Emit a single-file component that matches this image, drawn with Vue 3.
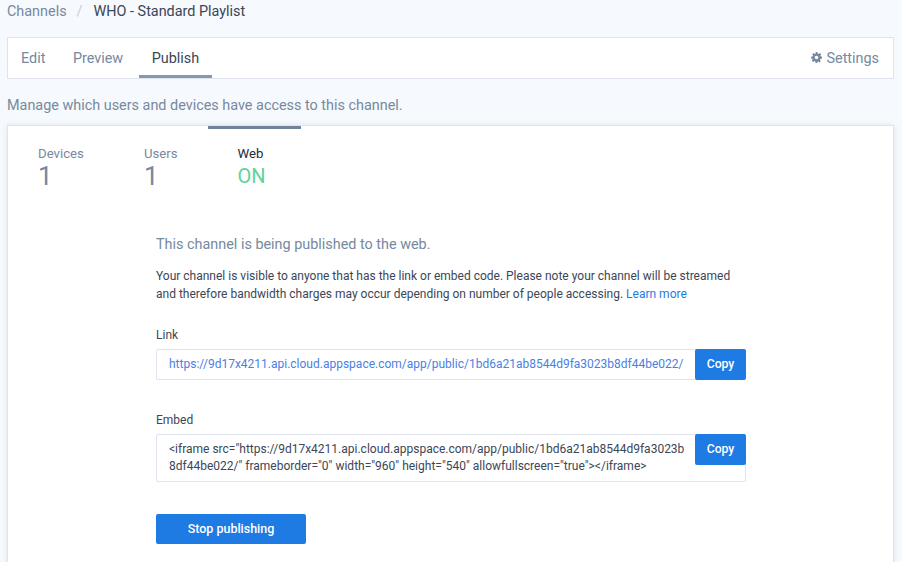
<script setup>
const tabs = ['Edit', 'Preview', 'Publish']
const stats = [
  { label: 'Devices', value: '1' },
  { label: 'Users', value: '1' },
  { label: 'Web', value: 'ON', active: true }
]
const link = 'https://9d17x4211.api.cloud.appspace.com/app/public/1bd6a21ab8544d9fa3023b8df44be022/'
const embed = '<iframe src="https://9d17x4211.api.cloud.appspace.com/app/public/1bd6a21ab8544d9fa3023b8df44be022/" frameborder="0" width="960" height="540" allowfullscreen="true"></iframe>'
</script>

<template>
  <div class="page">
    <nav class="crumbs">
      <span class="crumb-link">Channels</span>
      <span class="crumb-sep">/</span>
      <span class="crumb-current">WHO - Standard Playlist</span>
    </nav>

    <div class="tabbar">
      <div class="tabs">
        <div v-for="t in tabs" :key="t" class="tab" :class="{ on: t === 'Publish' }">{{ t }}</div>
      </div>
      <div class="settings">
        <svg class="gear" viewBox="0 0 24 24" width="11" height="11" aria-hidden="true">
          <path fill="#76899e" fill-rule="evenodd" d="M10 0h4l.6 3.200c.8.2 1.500.5 2.200.9L19.500 2.300l2.800 2.800-1.800 2.700c.4.700.7 1.400.9 2.200L24 10.600v3.800l-3.600.6c-.2.800-.5 1.500-.9 2.200l1.800 2.700-2.800 2.800-2.700-1.800c-.7.4-1.400.7-2.200.9L14 24h-4l-.6-3.200c-.8-.2-1.500-.5-2.200-.9l-2.700 1.800-2.800-2.800 1.800-2.700c-.4-.7-.7-1.400-.9-2.200L0 14.400v-3.800l3.600-.6c.2-.8.5-1.500.9-2.200L2.700 5.100l2.800-2.800 2.700 1.800c.7-.4 1.400-.7 2.200-.9zM12 8a4 4 0 1 0 0 8 4 4 0 0 0 0-8z"/>
        </svg>
        <span>Settings</span>
      </div>
    </div>

    <p class="lead">Manage which users and devices have access to this channel.</p>

    <section class="card">
      <div class="stats">
        <div v-for="s in stats" :key="s.label" class="stat" :class="{ active: s.active }">
          <div class="stat-label">{{ s.label }}</div>
          <div class="stat-value">{{ s.value }}</div>
        </div>
      </div>

      <div class="body">
        <h2 class="title">This channel is being published to the web.</h2>
        <p class="note">Your channel is visible to anyone that has the link or embed code. Please note your channel will be streamed and therefore bandwidth charges may occur depending on number of people accessing. <a class="more">Learn more</a></p>

        <label class="field-label first">Link</label>
        <div class="field">
          <div class="input link">{{ link }}</div>
          <button class="copy">Copy</button>
        </div>

        <label class="field-label second">Embed</label>
        <div class="field">
          <div class="input code">{{ embed }}</div>
          <button class="copy">Copy</button>
        </div>

        <button class="stop">Stop publishing</button>
      </div>
    </section>
  </div>
</template>

<style>
html, body { margin: 0; background: #f6f9fd; overflow: hidden; }
</style>

<style scoped>
.page {
  height: 562px;
  box-sizing: border-box;
  padding: 0 8px 0 7px;
  overflow: hidden;
  background: #f6f9fd;
  font-family: Roboto, "Liberation Sans", sans-serif;
  font-size: 14.4px;
  color: #3b4657;
}
.crumbs { display: flex; height: 37px; padding-top: 3px; box-sizing: border-box; line-height: 18px; }
.crumb-link { color: #76899e; }
.crumb-sep { color: #c5ced8; margin: 0 11px 0 10px; }
.crumb-current { color: #3b4657; }

.tabbar {
  height: 42px;
  box-sizing: border-box;
  display: flex;
  justify-content: space-between;
  background: #fff;
  border: 1px solid #dfe3ee;
}
.tabs { display: flex; gap: 1.5px; }
.tab {
  padding: 0 13px;
  line-height: 41px;
  height: 40px;
  box-sizing: border-box;
  color: #76899e;
}
.tab.on { color: #3b4657; border-bottom: 3px solid #8499ad; margin-left: 1px; }
.settings { display: flex; align-items: center; gap: 4px; color: #76899e; padding-right: 14px; }
.gear { display: block; margin-top: -2px; }

.lead { margin: 0; height: 46px; box-sizing: border-box; padding-top: 18px; line-height: 18px; color: #76899e; }

.card {
  height: 460px;
  box-sizing: border-box;
  background: #fff;
  border: 1px solid #dfe3ee;
  box-shadow: 0 0 6px rgba(60, 80, 120, .1);
}
.stats { display: flex; }
.stat { padding: 3px 30px 0; height: 72px; box-sizing: border-box; border-top: 3px solid transparent; }
.stat.active { border-top-color: #708499; width: 93px; }
.stat-label { font-size: 13.2px; line-height: 18px; margin-top: 13px; color: #76899e; }
.stat-value { font-size: 26px; line-height: 28px; margin-top: -1px; color: #76899e; }
.stat.active .stat-label { color: #222b38; }
.stat.active .stat-value { color: #5fd39a; font-size: 20px; }

.body { width: 590px; margin-left: 148px; padding-top: 38px; }
.title { margin: 0; font-size: 14.4px; font-weight: 400; line-height: 18px; color: #76899e; }
.note { margin: 12.5px 0 0; font-size: 12px; line-height: 18px; color: #3b4657; }
.more { color: #1f7ae0; }
.field-label { display: block; font-size: 12px; line-height: 16px; color: #3b4657; }
.first { margin-top: 24.5px; }
.second { margin-top: 32px; }
.field { position: relative; margin-top: 6px; }
.input {
  box-sizing: border-box;
  border: 1px solid #dfe3ee;
  border-radius: 2px;
  font-size: 12px;
  background: #fff;
  padding: 0 12px;
}
.link { height: 31px; line-height: 29px; color: #4a7fe4; white-space: nowrap; overflow: hidden; }
.code { height: 48px; padding: 6px 60px 0 12px; line-height: 17px; color: #3b4657; word-break: break-all; }
.copy {
  position: absolute;
  top: 0;
  right: 0;
  width: 51px;
  height: 31px;
  padding: 0 0 2px;
  border: 0;
  border-radius: 2px;
  background: #1e7be4;
  color: #fff;
  font: 500 12.2px Roboto, sans-serif;
}
.stop {
  display: block;
  margin-top: 32px;
  width: 150px;
  height: 30px;
  padding: 0 0 2px;
  border: 0;
  border-radius: 2px;
  background: #1e7be4;
  color: #fff;
  font: 500 12.48px Roboto, sans-serif;
}
</style>
